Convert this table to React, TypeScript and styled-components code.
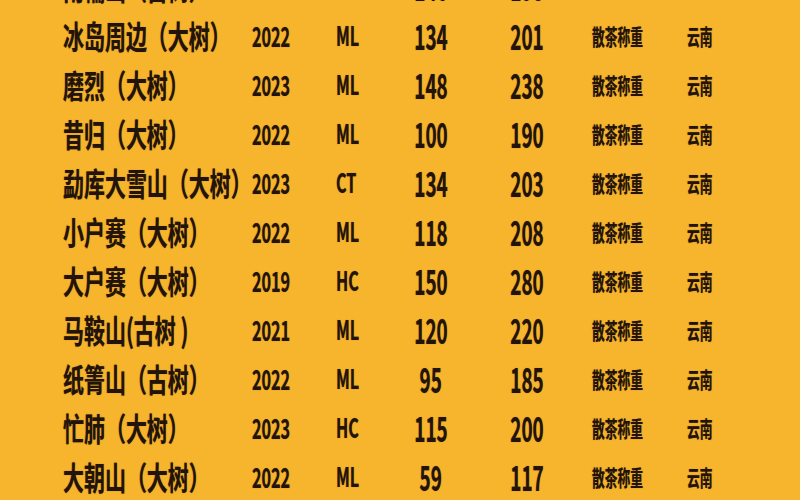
import styled, { createGlobalStyle } from "styled-components";

interface TeaRow {
  name: string;
  year: string;
  grade: string;
  low: string;
  high: string;
}

const ROWS: TeaRow[] = [
  { name: "南糯山（古树）", year: "2022", grade: "ML", low: "146", high: "198" },
  { name: "冰岛周边（大树）", year: "2022", grade: "ML", low: "134", high: "201" },
  { name: "磨烈（大树）", year: "2023", grade: "ML", low: "148", high: "238" },
  { name: "昔归（大树）", year: "2022", grade: "ML", low: "100", high: "190" },
  { name: "勐库大雪山（大树）", year: "2023", grade: "CT", low: "134", high: "203" },
  { name: "小户赛（大树）", year: "2022", grade: "ML", low: "118", high: "208" },
  { name: "大户赛（大树）", year: "2019", grade: "HC", low: "150", high: "280" },
  { name: "马鞍山(古树 )", year: "2021", grade: "ML", low: "120", high: "220" },
  { name: "纸箐山（古树）", year: "2022", grade: "ML", low: "95", high: "185" },
  { name: "忙肺（大树）", year: "2023", grade: "HC", low: "115", high: "200" },
  { name: "大朝山（大树）", year: "2022", grade: "ML", low: "59", high: "117" },
];

const BG = "#f7b42d";
const INK = "#22140a";

const GlobalStyle = createGlobalStyle`
  html, body {
    margin: 0;
    padding: 0;
    background: ${BG};
    overflow: hidden;
  }
  body {
    font-family: "Noto Sans CJK SC", "Noto Sans", sans-serif;
    color: ${INK};
  }
`;

export default function App(): React.ReactElement {
  return (
    <Page>
      <GlobalStyle />
      <Table>
        {ROWS.map((r) => (
          <Row key={r.name}>
            <Cell $align="start">
              <Text $size={32} $squeeze={0.655} $origin="left">
                {r.name}
              </Text>
            </Cell>
            <Cell $align="center">
              <Text $size={28} $squeeze={0.58}>{r.year}</Text>
            </Cell>
            <Cell $align="start" $pad={34}>
              <Text $size={27} $squeeze={0.6} $origin="left">
                {r.grade}
              </Text>
            </Cell>
            <Cell $align="center">
              <Text $size={35} $squeeze={0.54}>{r.low}</Text>
            </Cell>
            <Cell $align="center">
              <Text $size={35} $squeeze={0.54}>{r.high}</Text>
            </Cell>
            <Cell $align="start" $pad={8}>
              <Text $size={22} $squeeze={0.58} $origin="left">
                散茶称重
              </Text>
            </Cell>
            <Cell $align="start" $pad={8}>
              <Text $size={22} $squeeze={0.58} $origin="left">
                云南
              </Text>
            </Cell>
          </Row>
        ))}
      </Table>
    </Page>
  );
}

const Page = styled.div`
  width: 800px;
  height: 500px;
  overflow: hidden;
`;

const Table = styled.div`
  display: flex;
  flex-direction: column;
  margin-top: -39px;
  padding-left: 63px;
`;

const Row = styled.div`
  display: grid;
  grid-template-columns: 177px 62px 90px 78px 114px 95px 80px;
  align-items: center;
  height: 49px;
`;

const Cell = styled.div<{ $align: "start" | "center"; $pad?: number }>`
  display: flex;
  justify-content: ${(p) => (p.$align === "center" ? "center" : "flex-start")};
  padding-left: ${(p) => p.$pad ?? 0}px;
  min-width: 0;
  white-space: nowrap;
`;

const Text = styled.span<{ $size: number; $squeeze: number; $origin?: string }>`
  display: inline-block;
  font-size: ${(p) => p.$size}px;
  font-weight: 700;
  line-height: 1;
  transform: scaleX(${(p) => p.$squeeze});
  transform-origin: ${(p) => p.$origin ?? "center"} center;
  text-shadow: 0 0 1px rgba(60, 20, 0, 0.6);
`;
